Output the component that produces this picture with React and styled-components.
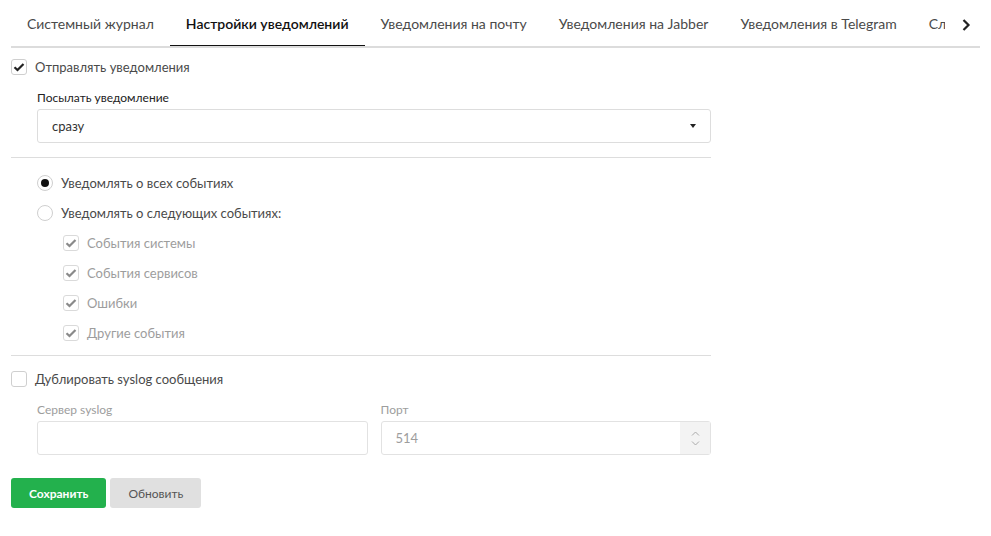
import React, { useState } from 'react';
import styled, { createGlobalStyle } from 'styled-components';

const GlobalStyle = createGlobalStyle`
  body {
    margin: 0;
    background: #fff;
    font-family: Lato, "Open Sans", sans-serif;
    color: #333;
  }
`;

const Page = styled.div`
  padding: 0 11px;
`;

const TabBar = styled.div`
  display: flex;
  align-items: stretch;
  border-bottom: 2px solid #dcdcdc;
  height: 46px;
`;

const TabScroll = styled.div`
  flex: 1;
  display: flex;
  overflow: hidden;
  white-space: nowrap;
`;

const Tab = styled.div`
  padding: 0 16px;
  display: flex;
  align-items: center;
  font-size: 14px;
  color: ${p => (p.active ? '#111' : '#4a4a4a')};
  font-weight: ${p => (p.active ? 600 : 400)};
  border-bottom: 3px solid ${p => (p.active ? '#111' : 'transparent')};
  margin-bottom: -2px;
  padding-top: 2px;
  flex-shrink: 0;
`;

const ScrollButton = styled.div`
  width: 35px;
  box-sizing: border-box;
  padding: 3px 0 0 16px;
  display: flex;
  align-items: center;
`;

const Form = styled.div`
  width: 700px;
`;

const CheckRow = styled.label`
  display: flex;
  align-items: center;
  gap: 8px;
  height: 30px;
  font-size: 13px;
  color: ${p => (p.muted ? '#9d9d9d' : '#4a4a4a')};
  margin-left: ${p => p.indent || 0}px;
  margin-top: ${p => p.top || 0}px;
`;

const Box = styled.span`
  width: 16px;
  height: 16px;
  box-sizing: border-box;
  border: 1px solid ${p => (p.muted ? '#dadada' : '#cfcfcf')};
  border-radius: 3px;
  display: flex;
  align-items: center;
  justify-content: center;
  background: #fff;
`;

const Radio = styled.span`
  width: 16px;
  height: 16px;
  box-sizing: border-box;
  border: 1px solid #cfcfcf;
  border-radius: 50%;
  display: flex;
  align-items: center;
  justify-content: center;
  &::after {
    content: '';
    display: ${p => (p.checked ? 'block' : 'none')};
    width: 8px;
    height: 8px;
    border-radius: 50%;
    background: #111;
  }
`;

const Field = styled.div`
  margin-left: ${p => (p.flush ? 0 : 26)}px;
  flex: ${p => p.grow || 'none'};
`;

const Label = styled.div`
  font-size: 12px;
  color: ${p => (p.muted ? '#9d9d9d' : '#222')};
  height: 22px;
  display: flex;
  align-items: center;
  margin-top: 4px;
  margin-bottom: 1px;
`;

const Select = styled.div`
  height: 34px;
  box-sizing: border-box;
  border: 1px solid #ddd;
  border-radius: 3px;
  display: flex;
  align-items: center;
  justify-content: space-between;
  padding: 0 14px 0 14px;
  font-size: 13px;
  color: #333;
`;

const Caret = styled.span`
  width: 0;
  height: 0;
  border-left: 3.5px solid transparent;
  border-right: 3.5px solid transparent;
  border-top: 4px solid #222;
`;

const Divider = styled.hr`
  border: 0;
  border-top: 1px solid #ddd;
  margin: ${p => p.top}px 0 ${p => p.bottom}px;
`;

const Inputs = styled.div`
  display: flex;
  gap: 13px;
`;

const Input = styled.div`
  height: 34px;
  box-sizing: border-box;
  border: 1px solid #e2e2e2;
  border-radius: 3px;
  display: flex;
  align-items: stretch;
  font-size: 13px;
  color: #9d9d9d;
`;

const InputValue = styled.span`
  flex: 1;
  display: flex;
  align-items: center;
  padding-left: 14px;
`;

const Spinner = styled.span`
  width: 30px;
  background: #f3f3f3;
  display: flex;
  flex-direction: column;
  align-items: center;
  justify-content: center;
  gap: 5px;
`;

const Buttons = styled.div`
  display: flex;
  gap: 4px;
  margin-top: 23px;
`;

const Button = styled.button`
  height: 30px;
  border: 0;
  border-radius: 3px;
  padding: 0 18px;
  font-family: Lato, sans-serif;
  font-size: 12px;
  font-weight: ${p => (p.primary ? 700 : 400)};
  background: ${p => (p.primary ? '#23b14d' : '#e0e0e0')};
  color: ${p => (p.primary ? '#fff' : '#555')};
`;

const Check = ({ color }) => (
  <svg width="12" height="10" viewBox="0 0 12 10">
    <path d="M1.5 5.2 L4.5 8 L10.5 2" fill="none" stroke={color} strokeWidth="2.2" />
  </svg>
);

const Chevron = ({ up }) => (
  <svg width="9" height="5" viewBox="0 0 9 5">
    <path d={up ? 'M1 4.5 L4.5 1 L8 4.5' : 'M1 0.5 L4.5 4 L8 0.5'} fill="none" stroke="#aaa" strokeWidth="1" />
  </svg>
);

const tabs = [
  'Системный журнал',
  'Настройки уведомлений',
  'Уведомления на почту',
  'Уведомления на Jabber',
  'Уведомления в Telegram',
  'Служба SNMP',
];

const events = ['События системы', 'События сервисов', 'Ошибки', 'Другие события'];

export default function App() {
  const [active] = useState(1);

  return (
    <Page>
      <GlobalStyle />
      <TabBar>
        <TabScroll>
          {tabs.map((t, i) => (
            <Tab key={t} active={i === active}>{t}</Tab>
          ))}
        </TabScroll>
        <ScrollButton>
          <svg width="10" height="14" viewBox="0 0 10 14">
            <path d="M2.5 2 L7.5 7 L2.5 12" fill="none" stroke="#222" strokeWidth="2.2" />
          </svg>
        </ScrollButton>
      </TabBar>

      <Form>
        <CheckRow top={4}>
          <Box><Check color="#222" /></Box>
          Отправлять уведомления
        </CheckRow>
        <Field>
          <Label>Посылать уведомление</Label>
          <Select>
            сразу
            <Caret />
          </Select>
        </Field>

        <Divider top={14} bottom={10} />

        <CheckRow indent={26}>
          <Radio checked />
          Уведомлять о всех событиях
        </CheckRow>
        <CheckRow indent={26}>
          <Radio />
          Уведомлять о следующих событиях:
        </CheckRow>
        {events.map(e => (
          <CheckRow key={e} indent={52} muted>
            <Box muted><Check color="#8a8a8a" /></Box>
            {e}
          </CheckRow>
        ))}

        <Divider top={7} bottom={8} />

        <CheckRow>
          <Box />
          Дублировать syslog сообщения
        </CheckRow>
        <Inputs>
          <Field grow="1">
            <Label muted>Сервер syslog</Label>
            <Input />
          </Field>
          <Field grow="1" flush>
            <Label muted>Порт</Label>
            <Input>
              <InputValue>514</InputValue>
              <Spinner>
                <Chevron up />
                <Chevron />
              </Spinner>
            </Input>
          </Field>
        </Inputs>

        <Buttons>
          <Button primary>Сохранить</Button>
          <Button>Обновить</Button>
        </Buttons>
      </Form>
    </Page>
  );
}
